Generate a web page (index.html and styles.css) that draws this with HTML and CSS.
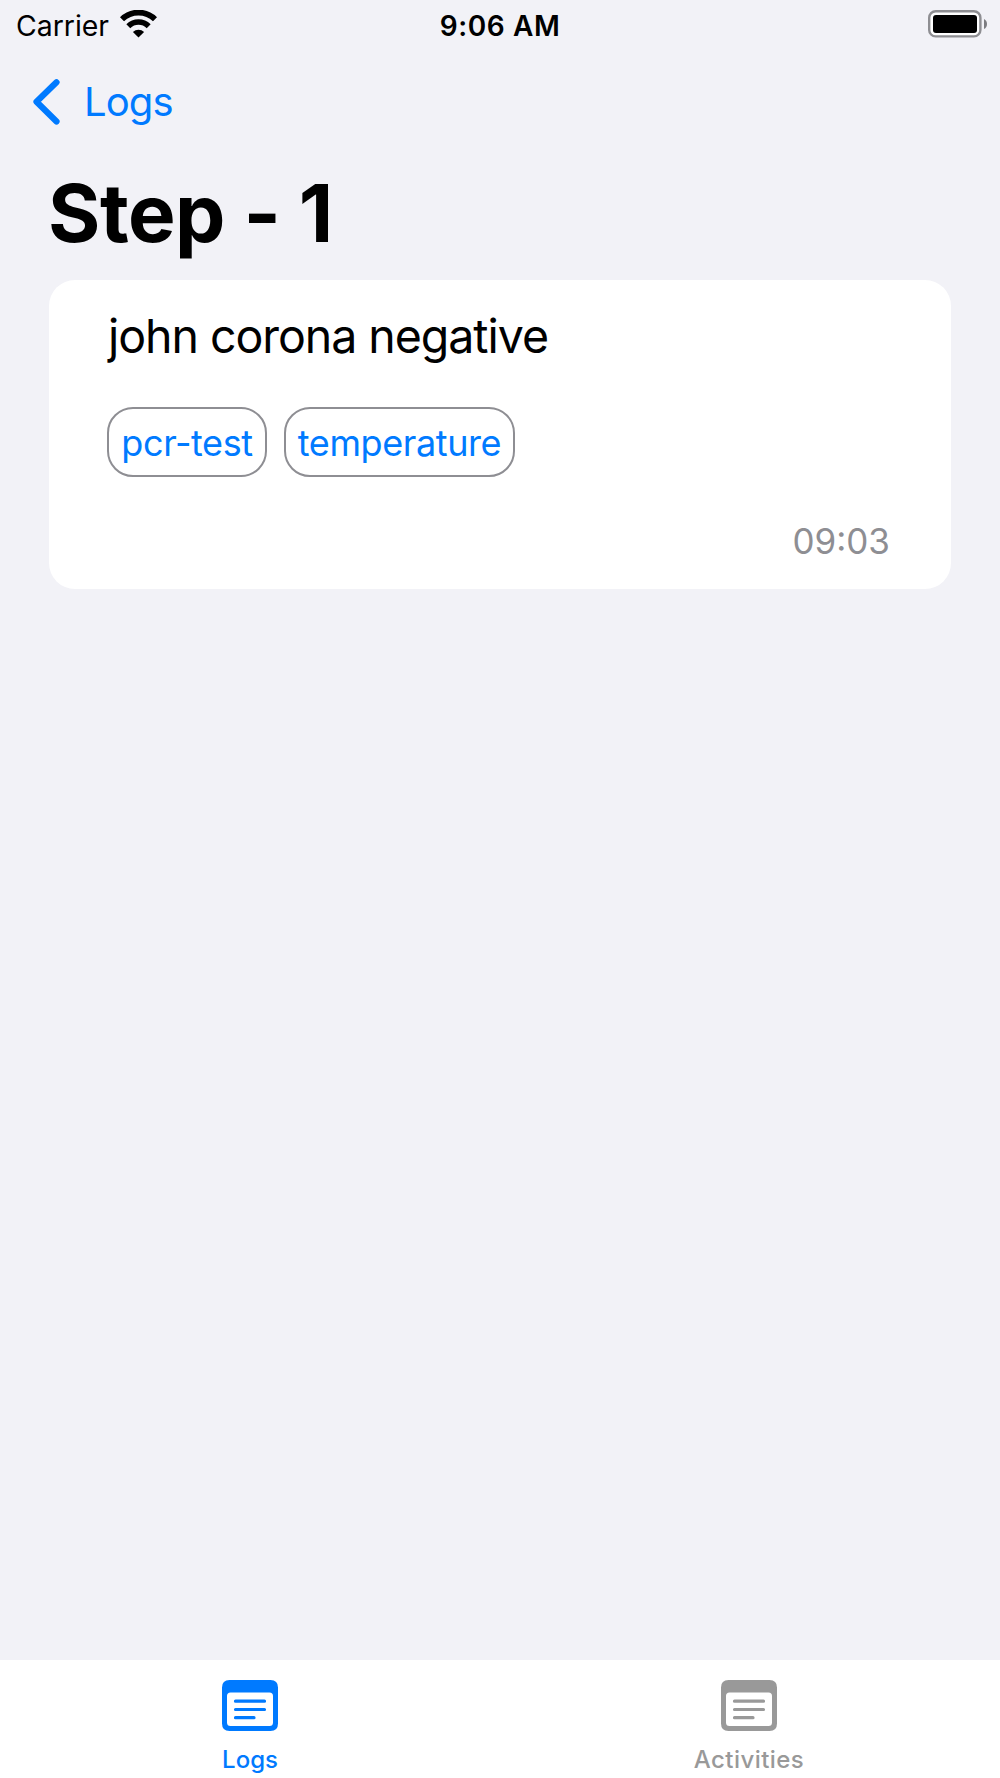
FILE: index.html
```
<!DOCTYPE html>
<html lang="en">
<head>
    <meta charset="UTF-8">
    <title>Step - 1</title>
    <meta name="viewport" content="width=device-width, initial-scale=1.0">
    <link rel="stylesheet" href="styles.css">
</head>
<body>
    <div class="app">
        <div class="status">
            <div class="carrier">
                <span class="carrier-name">Carrier</span>
                <svg class="wifi" width="37" height="28" viewBox="0 0 37 28">
                    <path d="M2 9.3A23.6 23.6 0 0 1 35 9.3" fill="none" stroke="#000" stroke-width="5.8"/>
                    <path d="M8.3 16.2A14.6 14.6 0 0 1 28.7 16.2" fill="none" stroke="#000" stroke-width="5.6"/>
                    <path d="M12.9 22A8.3 8.3 0 0 1 24.1 22L18.5 27.5Z"/>
                </svg>
            </div>
            <span class="clock">9:06 AM</span>
            <div class="power">
                <svg width="60" height="28" viewBox="0 0 60 28">
                    <rect x="1.2" y="1.2" width="51.2" height="25.2" rx="6.5" fill="#fff" stroke="#8e8e92" stroke-width="2.4"/>
                    <rect x="5" y="5" width="44" height="18" rx="3"/>
                    <path d="M56 9Q59 10.5 59 14Q59 17.5 56 19Z" fill="#7c7c80"/>
                </svg>
            </div>
        </div>

        <div class="nav">
            <svg width="28" height="46" viewBox="0 0 28 46">
                <path d="M24.5 3.3L4.5 22.8L24.5 42.5" fill="none" stroke="#007aff" stroke-width="6.2" stroke-linecap="round" stroke-linejoin="round"/>
            </svg>
            <span class="back">Logs</span>
        </div>

        <div class="content">
            <h1 class="title">Step - 1</h1>
            <div class="card">
                <p class="log-text">john corona negative</p>
                <div class="tags">
                    <span class="tag tag-pcr">pcr-test</span>
                    <span class="tag tag-temp">temperature</span>
                </div>
                <p class="time">09:03</p>
            </div>
        </div>

        <div class="tabbar">
            <div class="tab active">
                <svg width="56" height="51" viewBox="0 0 56 51">
                    <path fill="currentColor" fill-rule="evenodd" d="M7.5 0H48.5Q56 0 56 7.5V43.5Q56 51 48.5 51H7.5Q0 51 0 43.5V7.5Q0 0 7.5 0ZM8.5 12.5Q5 12.5 5 16V42.5Q5 46 8.5 46H47.5Q51 46 51 42.5V16Q51 12.5 47.5 12.5Z"/>
                    <path fill="none" stroke="currentColor" stroke-width="3.2" stroke-linecap="round" d="M13.5 21.2H42.5M13.5 29.5H42.5M13.5 37.7H32"/>
                </svg>
                <span class="tab-label">Logs</span>
            </div>
            <div class="tab">
                <svg width="56" height="51" viewBox="0 0 56 51">
                    <path fill="currentColor" fill-rule="evenodd" d="M7.5 0H48.5Q56 0 56 7.5V43.5Q56 51 48.5 51H7.5Q0 51 0 43.5V7.5Q0 0 7.5 0ZM8.5 12.5Q5 12.5 5 16V42.5Q5 46 8.5 46H47.5Q51 46 51 42.5V16Q51 12.5 47.5 12.5Z"/>
                    <path fill="none" stroke="currentColor" stroke-width="3.2" stroke-linecap="round" d="M13.5 21.2H42.5M13.5 29.5H42.5M13.5 37.7H32"/>
                </svg>
                <span class="tab-label label-wide">Activities</span>
            </div>
        </div>
    </div>
</body>
</html>
```
FILE: styles.css
```
*{
    margin:0;
    padding:0;
    box-sizing:border-box;
}
body{
    background-color:#f2f2f7;
    color:#000;
    font-family:Inter, "Liberation Sans", sans-serif;
}
svg{
    display:block;
    flex:none;
}
.app{
    height:1778px;
    display:flex;
    flex-direction:column;
}
/* status bar */
.status{
    height:52px;
    padding:0 12px;
    display:grid;
    grid-template-columns:1fr auto 1fr;
    align-items:center;
    line-height:52px;
    font-size:28.4px;
}
.carrier{
    padding-left:4px;
    display:flex;
    align-items:center;
}
.carrier-name{
    width:104px;
    white-space:nowrap;
}
.wifi{
    margin-top:-4px;
}
.clock{
    font-weight:600;
    font-size:28px;
    letter-spacing:.6px;
}
.power{
    display:flex;
    justify-content:flex-end;
    margin-top:-4px;
}
/* back link */
.nav{
    height:99px;
    padding-left:32px;
    display:flex;
    align-items:center;
    gap:24px;
    color:#007aff;
}
.back{
    font-size:40px;
    letter-spacing:-.9px;
}
.content{
    flex:1;
    padding:20px 49px 0;
}
.title{
    height:109px;
    margin-left:-1px;
    line-height:84px;
    font-size:80px;
    font-weight:700;
    letter-spacing:-.5px;
    font-variant-ligatures:no-contextual;
}
.card{
    height:309px;
    padding:26px 61px 0 59px;
    border-radius:26px;
    background-color:#fff;
}
.log-text{
    height:101px;
    line-height:60px;
    font-size:46.5px;
    letter-spacing:-1.05px;
}
.tags{
    margin-left:-1px;
    display:flex;
    gap:17px;
}
.tag{
    height:70px;
    padding-top:1px;
    display:flex;
    align-items:center;
    justify-content:center;
    border:2px solid #8e8e93;
    border-radius:26px;
    color:#007aff;
    font-size:36px;
    letter-spacing:-.4px;
}
.tag-pcr{ width:160px;}
.tag-temp{ width:231px;}
.time{
    margin-top:42px;
    line-height:44px;
    font-size:35px;
    text-align:right;
    color:#8e8e93;
}
/* bottom tabs */
.tabbar{
    height:118px;
    display:flex;
    background-color:#fff;
}
.tab{
    width:499px;
    padding-top:20px;
    display:flex;
    flex-direction:column;
    align-items:center;
    color:#999;
}
.active{
    color:#007aff;
}
.tab-label{
    margin-top:14px;
    line-height:30px;
    font-size:24px;
    font-weight:500;
    padding-left:1px;
}
.label-wide{
    letter-spacing:.45px;
}
```
